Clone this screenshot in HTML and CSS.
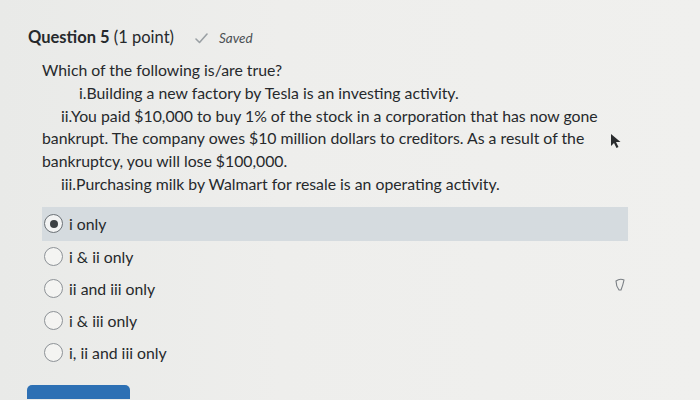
FILE: index.html
```html
<!DOCTYPE html>
<html lang="en">
<head>
<meta charset="utf-8">
<link rel="stylesheet" href="styles.css">
</head>
<body>
<div class="page">
  <div class="q-header">
    <h2 class="q-title"><strong>Question 5</strong> (1 point)</h2>
    <span class="saved">
      <svg class="check" width="13" height="11" viewBox="0 0 13 11"><path d="M1 6 L4.5 9.5 L12 1" fill="none" stroke="#9aa0a4" stroke-width="1.6" stroke-linecap="round" stroke-linejoin="round"/></svg>
      <em>Saved</em>
    </span>
  </div>
  <div class="q-body">
    <p class="line">Which of the following is/are true?</p>
    <p class="line ind1">i.Building a new factory by Tesla is an investing activity.</p>
    <p class="line ind2 wrap">ii.You paid $10,000 to buy 1% of the stock in a corporation that has now gone bankrupt. The company owes $10 million dollars to creditors. As a result of the bankruptcy, you will lose $100,000.</p>
    <p class="line ind2">iii.Purchasing milk by Walmart for resale is an operating activity.</p>
  </div>
  <ul class="options">
    <li class="option selected"><span class="radio"><span class="dot"></span></span><span>i only</span></li>
    <li class="option"><span class="radio"></span><span>i &amp; ii only</span></li>
    <li class="option"><span class="radio"></span><span>ii and iii only</span></li>
    <li class="option"><span class="radio"></span><span>i &amp; iii only</span></li>
    <li class="option"><span class="radio"></span><span>i, ii and iii only</span></li>
  </ul>
  <div class="actions"><button class="btn" type="button"></button></div>
  <svg class="cursor" width="12" height="16" viewBox="0 0 12 16"><path d="M1 1 L1 13 L4 10 L6.5 15 L8.5 14 L6 9 L10.5 9 Z" fill="#2a2c2e"/></svg>
  <svg class="pen" width="12" height="14" viewBox="0 0 12 14"><path d="M2 3 Q6 0 10 2 Q9 7 7 12 L5 12 Q2 8 2 3 Z" fill="none" stroke="#7a7f84" stroke-width="1.1"/></svg>
</div>
</body>
</html>
```
FILE: styles.css
```css
* { box-sizing: border-box; }
html, body { margin: 0; padding: 0; }
body {
  background: linear-gradient(90deg, #e9eae8 0%, #eeeeec 40%, #f0f0ee 100%);
  font-family: Lato, "Open Sans", sans-serif;
  color: #26292c;
  width: 700px;
  height: 400px;
  overflow: hidden;
}
.page {
  position: relative;
  padding-top: 26px;
}
.q-header {
  display: flex;
  align-items: center;
  padding-left: 28px;
  height: 22px;
}
.q-title {
  margin: 0;
  font-size: 16.5px;
  font-weight: 400;
}
.q-title strong { font-weight: 700; }
.saved {
  display: flex;
  align-items: center;
  margin-left: 21px;
  font-size: 13.5px;
  color: #4a4f53;
  padding-top: 2px;
}
.check { margin-right: 11px; }
.saved em { font-style: italic; }
.q-body {
  padding-left: 42px;
  margin-top: 11px;
  width: 680px;
  font-size: 15.8px;
  line-height: 22.8px;
}
.line { margin: 0; }
.ind1 { padding-left: 37px; }
.ind2 { text-indent: 19px; }
.wrap { width: 590px; }
.options {
  list-style: none;
  margin: 11px 0 0 42px;
  padding: 0;
  width: 586px;
}
.option {
  display: flex;
  align-items: center;
  height: 32px;
  padding-left: 2px;
  font-size: 15.8px;
  gap: 6px;
}
.option.selected {
  height: 34px;
  background: #d5dbdf;
}
.radio {
  width: 19px;
  height: 19px;
  border-radius: 50%;
  border: 1.5px solid #8d9297;
  background: #f4f4f2;
  display: flex;
  align-items: center;
  justify-content: center;
  flex: none;
}
.selected .radio { border-color: #6b7176; background: #f2f3f3; }
.dot {
  width: 8px;
  height: 8px;
  border-radius: 50%;
  background: #3c4043;
}
.actions {
  padding-left: 27px;
  margin-top: 16px;
}
.btn {
  display: block;
  width: 103px;
  height: 14px;
  border: none;
  border-radius: 5px 5px 0 0;
  background: #2d70b4;
}
.cursor { position: absolute; left: 610px; top: 133px; }
.pen { position: absolute; left: 614px; top: 278px; }
```
